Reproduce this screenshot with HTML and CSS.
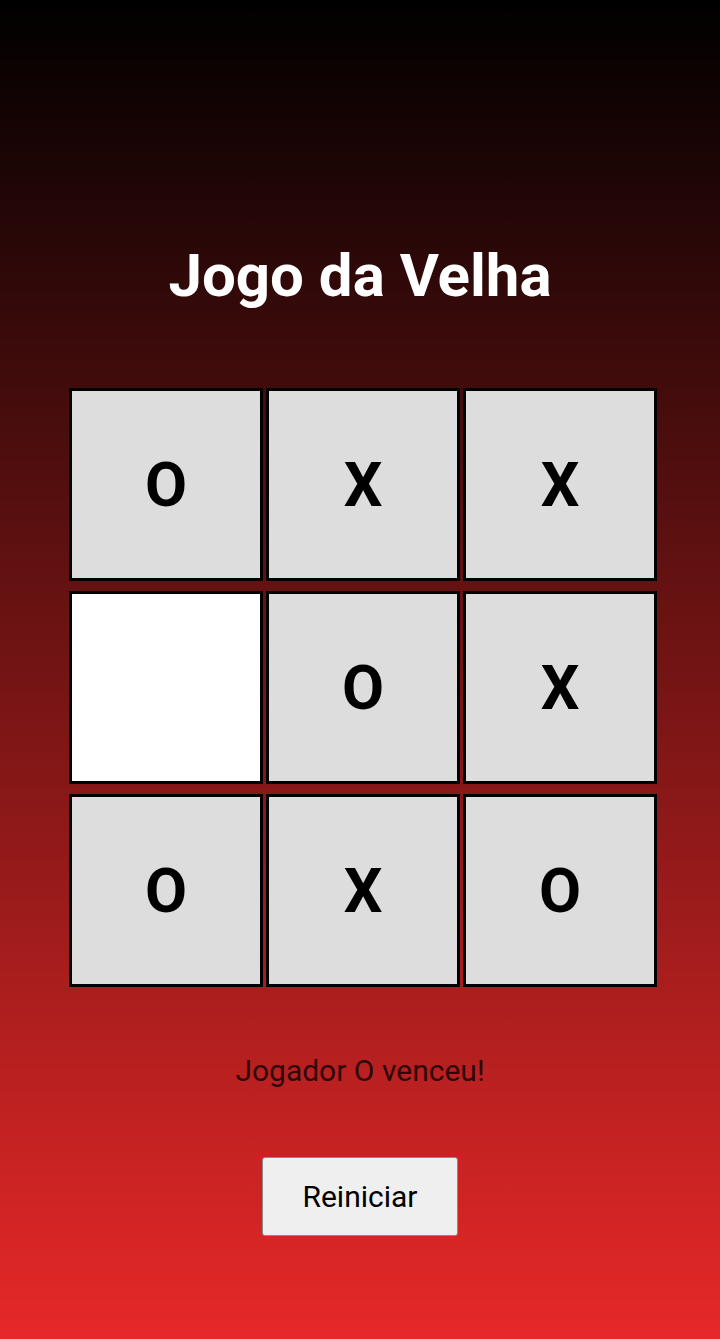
FILE: index.html
```html
<!DOCTYPE html>
<html lang="pt">
<head>
<meta charset="utf-8">
<title>Jogo da Velha</title>
<link rel="stylesheet" href="styles.css">
</head>
<body>
<main class="page">
  <h1 class="title">Jogo da Velha</h1>
  <div class="board">
    <div class="cell">O</div>
    <div class="cell">X</div>
    <div class="cell">X</div>
    <div class="cell empty"></div>
    <div class="cell">O</div>
    <div class="cell">X</div>
    <div class="cell">O</div>
    <div class="cell">X</div>
    <div class="cell">O</div>
  </div>
  <p class="status">Jogador O venceu!</p>
  <button class="restart" type="button">Reiniciar</button>
</main>
</body>
</html>
```
FILE: styles.css
```css
html, body {
  margin: 0;
  padding: 0;
}
body {
  min-height: 1339px;
  background: linear-gradient(to bottom, #000000 0%, #e72828 100%);
  font-family: Roboto, "Liberation Sans", sans-serif;
}
.page {
  display: flex;
  flex-direction: column;
  align-items: center;
}
.title {
  margin: 241px 0 0;
  font-size: 60px;
  line-height: 70px;
  font-weight: 700;
  color: #ffffff;
}
.board {
  margin-top: 77px;
  padding-left: 6px;
  display: grid;
  grid-template-columns: repeat(3, 194px);
  grid-auto-rows: 193px;
  column-gap: 3px;
  row-gap: 10px;
}
.cell {
  box-sizing: border-box;
  border: 3px solid #000;
  background: #dddddd;
  display: flex;
  align-items: center;
  justify-content: center;
  font-size: 61px;
  font-weight: 700;
  color: #000;
}
.cell.empty {
  background: #ffffff;
}
.status {
  margin: 66px 0 0;
  font-size: 30px;
  line-height: 35px;
  color: #2e0808;
}
.restart {
  margin-top: 69px;
  width: 196px;
  height: 79px;
  box-sizing: border-box;
  background: #efefef;
  border: 1px solid #8a8a8a;
  border-radius: 3px;
  font-family: Roboto, "Liberation Sans", sans-serif;
  font-size: 30px;
  color: #000;
  padding: 0;
}
```
